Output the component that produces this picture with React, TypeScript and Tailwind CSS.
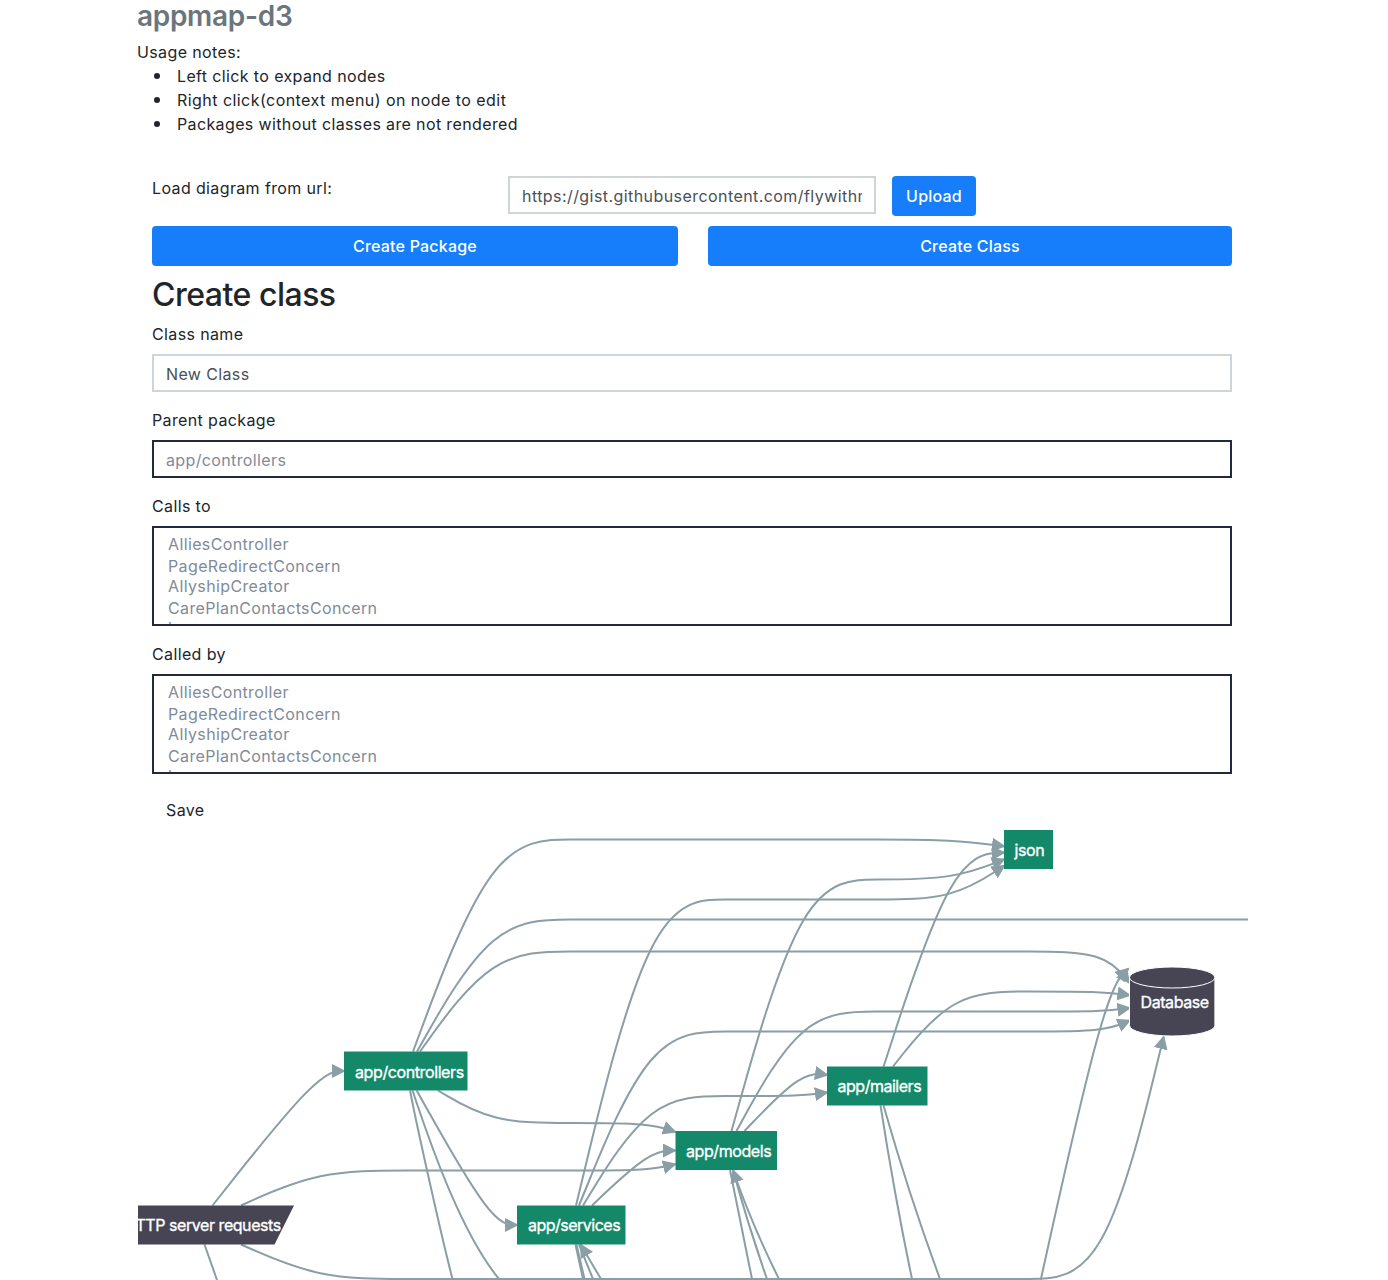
import React from "react";

type Pt = [number, number];

// Cubic B-spline through the given control points, clamped at both ends.
function basis(pts: Pt[]): string {
  const n = pts.length;
  const f = (v: number) => v.toFixed(2);
  let [x0, y0] = pts[0];
  let [x1, y1] = pts[1];
  let d = `M${f(x0)},${f(y0)}L${f((5 * x0 + x1) / 6)},${f((5 * y0 + y1) / 6)}`;
  const seg = (x: number, y: number) => {
    d += `C${f((2 * x0 + x1) / 3)},${f((2 * y0 + y1) / 3)},${f((x0 + 2 * x1) / 3)},${f((y0 + 2 * y1) / 3)},${f((x0 + 4 * x1 + x) / 6)},${f((y0 + 4 * y1 + y) / 6)}`;
    x0 = x1;
    y0 = y1;
    x1 = x;
    y1 = y;
  };
  for (let i = 2; i < n; i++) seg(pts[i][0], pts[i][1]);
  seg(x1, y1);
  return d + `L${f(x1)},${f(y1)}`;
}

const RANKS = [319, 405.5, 492, 571, 650, 726, 802, 877, 952.5, 1028.5, 1104.5, 1172, 1260];

function route(start: Pt, y: number, from: number, to: number, end?: Pt): string {
  const mid = RANKS.filter((x) => x >= from && x <= to).map((x): Pt => [x, y]);
  return basis(end ? [start, ...mid, end] : [start, ...mid]);
}

const arrows: string[] = [
  route([212.5, 1205.5], 1071, 319, 319, [344.5, 1071]),
  route([241, 1205.5], 1170.5, 319, 650, [675.5, 1164]),
  route([241, 1244.5], 1279, 319, 1104.5, [1163.7, 1036.5]),
  route([413, 1051.5], 839.5, 492, 952.5, [1004.5, 846.3]),
  route([420, 1051.5], 951.5, 492, 1104.5, [1129.5, 983]),
  route([438, 1090.5], 1123, 492, 650, [675.5, 1132]),
  route([416.7, 1090.5], 1225, 492, 492, [517.5, 1225]),
  route([576, 1205.5], 899.5, 650, 952.5, [1004.5, 865.6]),
  route([579, 1205.5], 1031.5, 650, 1104.5, [1130, 1020.4]),
  route([583, 1205.5], 1096, 650, 802, [827.5, 1092.5]),
  route([592, 1205.5], 1150.5, 650, 650, [675.5, 1150.5]),
  route([731.5, 1131], 879.5, 802, 952.5, [1004.5, 859.2]),
  route([736.5, 1131], 1011.5, 802, 1104.5, [1130, 1008]),
  route([744.5, 1131], 1071, 802, 802, [827.5, 1075]),
  route([883.6, 1066.5], 855, 952.5, 952.5, [1004.5, 852.5]),
  route([893, 1066.5], 991.5, 952.5, 1104.5, [1130, 995.4]),
  basis([[1033, 1315], [1104.5, 991], [1128.5, 968.5]]),
  "M779,1279C764,1249 745,1205 733,1170",
  "M601,1279L580.5,1244.5",
];

const plain: string[] = [
  route([417, 1051.5], 919.5, 492, 1260),
  "M410,1090.5C416,1122 441,1235 452.5,1279",
  "M412.5,1090.5C434,1155 463,1235 499,1279",
  "M204.5,1244.5L217,1280",
  "M575.5,1244.5L583,1279",
  "M576.5,1244.5L584.5,1279",
  "M579,1244.5L593,1279",
  "M730,1170L752,1279",
  "M733,1170Q748,1225 767,1279",
  "M880.5,1105.5Q895,1198 912,1279",
  "M883.5,1105.5Q910,1198 940,1279",
];

type Node = { label: string; x: number; y: number; w: number; tx: number; ty: number; tw: number };
const nodes: Node[] = [
  { label: "json", x: 1004, y: 830, w: 49, tx: 1014.5, ty: 856, tw: 30.5 },
  { label: "app/controllers", x: 344, y: 1051.5, w: 123.5, tx: 355, ty: 1078, tw: 109.5 },
  { label: "app/mailers", x: 827, y: 1066.5, w: 100.5, tx: 837.5, ty: 1092, tw: 84.5 },
  { label: "app/models", x: 675.5, y: 1131, w: 101.5, tx: 686, ty: 1157, tw: 86 },
  { label: "app/services", x: 517, y: 1205.5, w: 108.5, tx: 528, ty: 1231, tw: 93 },
];

function Diagram() {
  return (
    <svg className="block h-[450px] w-[1110px]" viewBox="138 830 1110 450">
      <defs>
        <marker id="arrow" viewBox="0 0 10 10" refX="9" refY="5" markerWidth="7" markerHeight="7" orient="auto">
          <path d="M0,0L10,5L0,10z" fill="#8a9ea5" />
        </marker>
      </defs>
      <g fill="none" stroke="#8a9ea5" strokeWidth="2">
        {plain.map((d) => (
          <path key={d} d={d} />
        ))}
        {arrows.map((d) => (
          <path key={d} d={d} markerEnd="url(#arrow)" />
        ))}
      </g>
      <g fontFamily="Inter, sans-serif" fontSize="16" fill="#fff" strokeWidth="0.35" stroke="#fff">
        {nodes.map((n) => (
          <g key={n.label}>
            <rect x={n.x} y={n.y} width={n.w} height="39" fill="#14896a" stroke="none" />
            <text x={n.tx} y={n.ty} textLength={n.tw}>
              {n.label}
            </text>
          </g>
        ))}
        <path d="M100,1205.5H294L274.500,1244.500H100Z" fill="#474554" stroke="none" />
        <text x="124" y="1231" textLength="157.500">
          HTTP server requests
        </text>
        <path
          d="M1129.500,977.500a42.700,10.500 0,0,0 85.400,0a42.700,10.500 0,0,0 -85.400,0v48a42.700,10.500 0,0,0 85.400,0v-48"
          fill="#474554"
          stroke="#fff"
          strokeWidth="1"
        />
        <text x="1140.500" y="1008" textLength="69">
          Database
        </text>
      </g>
    </svg>
  );
}

const classRows = [
  { name: "AlliesController", row: "h-[22px]" },
  { name: "PageRedirectConcern", row: "h-5" },
  { name: "AllyshipCreator", row: "h-[22px]" },
  { name: "CarePlanContactsConcern", row: "h-5" },
  { name: "k", row: "h-[21px]" },
];

function ListBox({ label }: { label: string }) {
  return (
    <div className="mb-4">
      <div className="mb-2 h-6">{label}</div>
      <div className="h-[100px] overflow-hidden border-2 border-[#232a40] px-[14px] pt-[6px] leading-[21px] text-[#808b98]">
        {classRows.map((c) => (
          <div key={c.name} className={c.row}>
            {c.name}
          </div>
        ))}
      </div>
    </div>
  );
}

function Note({ children }: { children: React.ReactNode }) {
  return (
    <li className="flex items-center pl-[17px]">
      <span className="mr-[17px] size-[6px] rounded-full bg-[#212529]" />
      {children}
    </li>
  );
}

export default function App() {
  return (
    <div className="h-[1280px] overflow-hidden bg-white font-['Inter',sans-serif] text-[16px] leading-6 tracking-[0.37px] text-[#212529]">
      <div className="ml-[138px] w-[1110px]">
        <h1 className="-ml-px mb-[7px] h-[33px] text-[28px] leading-[33px] font-semibold tracking-[-0.3px] text-[#6c757d]">
          appmap-d3
        </h1>
        <div className="-ml-px">Usage notes:</div>
        <ul className="-ml-px">
          <Note>Left click to expand nodes</Note>
          <Note>
            <span className="tracking-[0.45px]">Right click(context menu) on node to edit</span>
          </Note>
          <Note>Packages without classes are not rendered</Note>
        </ul>
        <div className="mt-10 w-[1094px] pl-[14px]">
          <div className="flex h-[50px] items-start">
            <div className="w-[356px]">Load diagram from url:</div>
            <div className="mr-4 h-[38px] w-[368px] border-2 border-[#ced4da] px-3 leading-[36px] text-[#495057]">
              <div className="overflow-hidden tracking-[0.43px] whitespace-nowrap">https://gist.githubusercontent.com/flywithmemsl</div>
            </div>
            <button className="h-10 w-[84px] rounded-[4px] bg-[#167efb] font-medium tracking-[0.2px] text-white">Upload</button>
          </div>
          <div className="flex justify-between">
            <button className="h-10 w-[526px] rounded-[4px] bg-[#167efb] font-medium tracking-[0.2px] text-white">Create Package</button>
            <button className="h-10 w-[524px] rounded-[4px] bg-[#167efb] font-medium tracking-[0.2px] text-white">Create Class</button>
          </div>
          <h2 className="mt-[10px] mb-2 h-[38px] text-[32px] leading-[38px] font-medium tracking-[-0.5px]">Create class</h2>
          <div className="mb-4">
            <div className="mb-2 h-6">Class name</div>
            <div className="h-[38px] border-2 border-[#ced4da] px-3 leading-[36px] text-[#495057]">New Class</div>
          </div>
          <div className="mb-4">
            <div className="mb-2 h-6">Parent package</div>
            <div className="h-[38px] border-2 border-[#232a40] px-3 leading-[36px] text-[#808b98]">app/controllers</div>
          </div>
          <ListBox label="Calls to" />
          <ListBox label="Called by" />
          <div className="flex h-10 items-center px-[14px]">Save</div>
        </div>
        <Diagram />
      </div>
    </div>
  );
}
